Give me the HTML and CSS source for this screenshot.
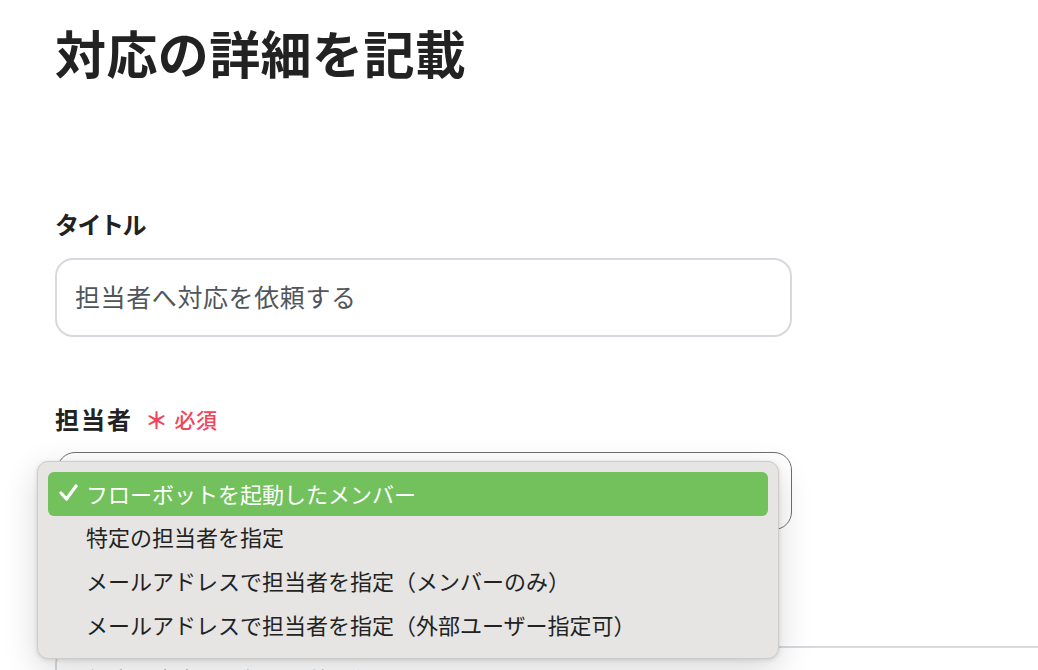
FILE: index.html
```html
<!DOCTYPE html>
<html lang="ja">
<head>
<meta charset="utf-8">
<title>対応の詳細を記載</title>
<link rel="stylesheet" href="styles.css">
</head>
<body>
<main class="page">
  <h1 class="title">対応の詳細を記載</h1>

  <section class="field field-title">
    <label class="label label-kana">タイトル</label>
    <div class="input">担当者へ対応を依頼する</div>
  </section>

  <section class="field field-assignee">
    <label class="label label-kanji">担当者<span class="required"><span class="star">＊</span>必須</span></label>
    <div class="select-wrap">
      <div class="select"></div>
      <ul class="menu">
        <li class="item selected">
          <svg class="check" width="19" height="17" viewBox="0 0 19 17"><polyline points="2,9 7.5,15 17,2" fill="none" stroke="#fff" stroke-width="3.2" stroke-linecap="round" stroke-linejoin="round"/></svg>
          <span>フローボットを起動したメンバー</span>
        </li>
        <li class="item"><span class="nocheck"></span><span>特定の担当者を指定</span></li>
        <li class="item"><span class="nocheck"></span><span>メールアドレスで担当者を指定（メンバーのみ）</span></li>
        <li class="item"><span class="nocheck"></span><span>メールアドレスで担当者を指定（外部ユーザー指定可）</span></li>
      </ul>
    </div>
  </section>

  <section class="field field-note">
    <div class="textarea">経由で内容を取得した値を使って設定してください</div>
  </section>
</main>
</body>
</html>
```

FILE: styles.css
```css
html, body {
  margin: 0;
  padding: 0;
  background: #ffffff;
  overflow: hidden;
}

body {
  width: 1038px;
  height: 670px;
  font-family: "Noto Sans CJK JP", "Noto Sans", sans-serif;
  color: #222222;
}

.page {
  padding: 22px 0 0 55px;
  width: 737px;
}

.title {
  margin: 0;
  font-size: 51px;
  line-height: 61px;
  font-weight: 700;
  color: #222222;
  letter-spacing: 0.4px;
}

.field {
  display: flex;
  flex-direction: column;
}

.field-title {
  margin-top: 126px;
}

.label {
  display: flex;
  align-items: center;
  font-size: 24px;
  line-height: 30px;
  font-weight: 700;
  color: #222222;
}

.label-kana {
  letter-spacing: -1.5px;
}

.label-kanji {
  letter-spacing: 2px;
}

.input {
  margin-top: 19px;
  box-sizing: border-box;
  height: 79px;
  border: 2px solid #d6d9de;
  border-radius: 18px;
  padding: 0 0 3px 18px;
  display: flex;
  align-items: center;
  font-size: 25px;
  color: #50555b;
  letter-spacing: 0.6px;
}

.field-assignee {
  margin-top: 67px;
}

.required {
  display: inline-flex;
  align-items: center;
  margin-left: 12px;
  font-size: 21px;
  font-weight: 500;
  color: #f0465c;
  letter-spacing: 0.5px;
}

.star {
  font-weight: 700;
  font-size: 23px;
  margin-right: 6px;
}

.select-wrap {
  position: relative;
  margin-top: 18px;
}

.select {
  box-sizing: border-box;
  height: 78px;
  margin-left: 2px;
  border: 1.5px solid #6e6e6e;
  border-radius: 18px;
  background: #ffffff;
}

.menu {
  position: absolute;
  left: -18px;
  top: 9px;
  width: 742px;
  box-sizing: border-box;
  margin: 0;
  padding: 10px;
  list-style: none;
  background: #e6e5e3;
  border: 1px solid #cdcccb;
  border-radius: 11px;
  box-shadow: 0 10px 34px rgba(0, 0, 0, 0.16), 0 1px 4px rgba(0, 0, 0, 0.12);
}

.item {
  display: flex;
  align-items: center;
  gap: 8px;
  box-sizing: border-box;
  height: 44px;
  padding: 0 0 5px 11px;
  border-radius: 6px;
  font-size: 22px;
  color: #222222;
  letter-spacing: 0;
}

.item.selected {
  background: #72c15d;
  color: #ffffff;
  padding-bottom: 3px;
}

.check,
.nocheck {
  flex: 0 0 19px;
  width: 19px;
  height: 17px;
}

.field-note {
  margin-top: 116px;
}

.textarea {
  box-sizing: border-box;
  width: 1100px;
  height: 80px;
  border: 2px solid #d6d9de;
  border-radius: 18px;
  padding: 14px 0 0 31px;
  font-size: 22px;
  color: #6a6f75;
}
```
